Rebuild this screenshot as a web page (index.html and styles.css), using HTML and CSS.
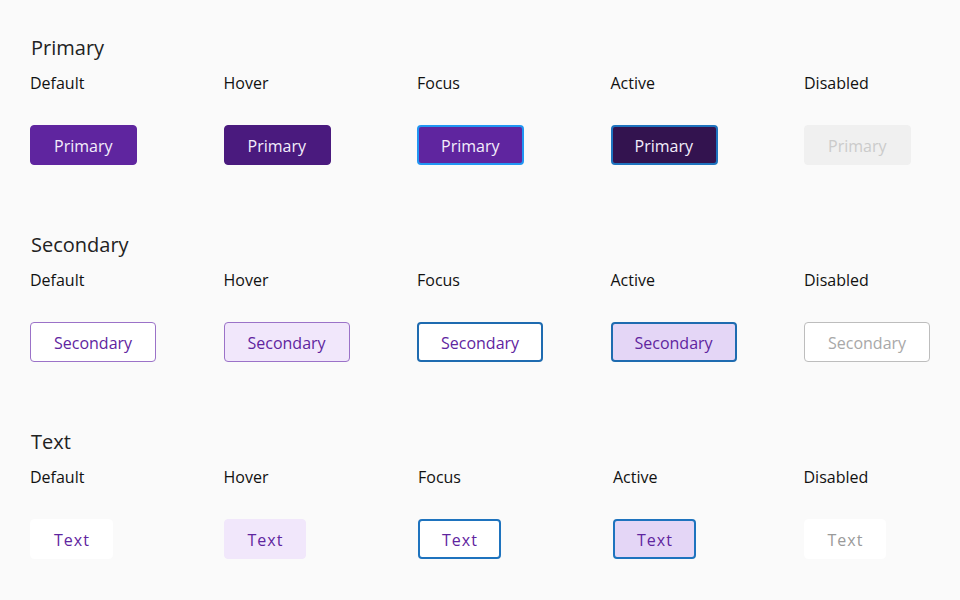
FILE: index.html
```html
<!DOCTYPE html>
<html>
<head>
<meta charset="utf-8">
<link rel="stylesheet" href="styles.css">
</head>
<body>
<main class="page">
  <section class="group">
    <h2 class="group-title">Primary</h2>
    <div class="states">
      <div class="state"><span class="state-label">Default</span><button class="btn primary">Primary</button></div>
      <div class="state"><span class="state-label">Hover</span><button class="btn primary hover">Primary</button></div>
      <div class="state"><span class="state-label">Focus</span><button class="btn primary focus">Primary</button></div>
      <div class="state"><span class="state-label">Active</span><button class="btn primary active">Primary</button></div>
      <div class="state"><span class="state-label">Disabled</span><button class="btn primary disabled">Primary</button></div>
    </div>
  </section>
  <section class="group">
    <h2 class="group-title">Secondary</h2>
    <div class="states">
      <div class="state"><span class="state-label">Default</span><button class="btn secondary">Secondary</button></div>
      <div class="state"><span class="state-label">Hover</span><button class="btn secondary hover">Secondary</button></div>
      <div class="state"><span class="state-label">Focus</span><button class="btn secondary focus">Secondary</button></div>
      <div class="state"><span class="state-label">Active</span><button class="btn secondary active">Secondary</button></div>
      <div class="state"><span class="state-label">Disabled</span><button class="btn secondary disabled">Secondary</button></div>
    </div>
  </section>
  <section class="group">
    <h2 class="group-title">Text</h2>
    <div class="states states-text">
      <div class="state"><span class="state-label">Default</span><button class="btn text">Text</button></div>
      <div class="state"><span class="state-label">Hover</span><button class="btn text hover">Text</button></div>
      <div class="state"><span class="state-label">Focus</span><button class="btn text focus">Text</button></div>
      <div class="state"><span class="state-label">Active</span><button class="btn text active">Text</button></div>
      <div class="state"><span class="state-label">Disabled</span><button class="btn text disabled">Text</button></div>
    </div>
  </section>
</main>
</body>
</html>
```
FILE: styles.css
```css
html, body {
  margin: 0;
  padding: 0;
  background: #fafafa;
  font-family: "Open Sans", "Noto Sans", sans-serif;
  color: #1a1a1a;
}

.page {
  padding: 34px 30px 0 30px;
}

.group {
  height: 197px;
}

.group-title {
  margin: 0 0 0 1px;
  font-size: 20px;
  line-height: 27px;
  font-weight: 400;
  color: #222;
}

.states {
  display: grid;
  grid-template-columns: 193.5px 193.5px 193.5px 193.5px auto;
  margin-top: 11px;
}

.states-text {
  grid-template-columns: 193.5px 194.5px 195px 190.5px auto;
}

.state {
  display: flex;
  flex-direction: column;
  align-items: flex-start;
}

.state-label {
  font-size: 16px;
  line-height: 22px;
  color: #111;
  margin-bottom: 31px;
}

.btn {
  box-sizing: border-box;
  height: 40px;
  padding: 1px 24px 0 23px;
  border-radius: 4px;
  font-family: "Open Sans", "Noto Sans", sans-serif;
  font-size: 16px;
  line-height: 20px;
  border: 1px solid transparent;
  cursor: pointer;
}

.btn.focus, .btn.active {
  border-width: 2px;
  padding: 1px 23px 0 22px;
}

/* Primary */
.primary {
  background: #5f259f;
  color: #f4eefb;
  border-color: #5f259f;
}
.primary.hover {
  background: #4a1a7e;
  border-color: #4a1a7e;
}
.primary.focus {
  background: #5f259f;
  border-color: #2196f3;
}
.primary.active {
  background: #33134f;
  border-color: #1e73be;
}
.primary.disabled {
  background: #f0f0f0;
  border-color: #f0f0f0;
  color: #cbcbcb;
}

/* Secondary */
.secondary {
  background: #ffffff;
  color: #5f259f;
  border-color: #9b72c8;
  padding: 1px 23px 0 23px;
}
.secondary.hover {
  background: #f1e7fb;
}
.secondary.focus {
  background: #ffffff;
  border-color: #1e6bb0;
  padding: 1px 22px 0 22px;
}
.secondary.active {
  background: #e4d6f6;
  border-color: #1e6bb0;
  padding: 1px 22px 0 22px;
}
.secondary.disabled {
  background: #ffffff;
  border-color: #bdbdbd;
  color: #a8a8a8;
}

/* Text */
.text {
  background: #ffffff;
  color: #5f259f;
  border-color: #ffffff;
  letter-spacing: 1px;
  padding: 1px 22px 0 23px;
}
.text.hover {
  background: #f1e7fb;
  border-color: #f1e7fb;
}
.text.focus {
  background: #ffffff;
  border-color: #1e73be;
  padding: 1px 21px 0 22px;
}
.text.active {
  background: #e4d6f6;
  border-color: #1e73be;
  padding: 1px 21px 0 22px;
}
.text.disabled {
  background: #ffffff;
  color: #9a9a9a;
}
```
